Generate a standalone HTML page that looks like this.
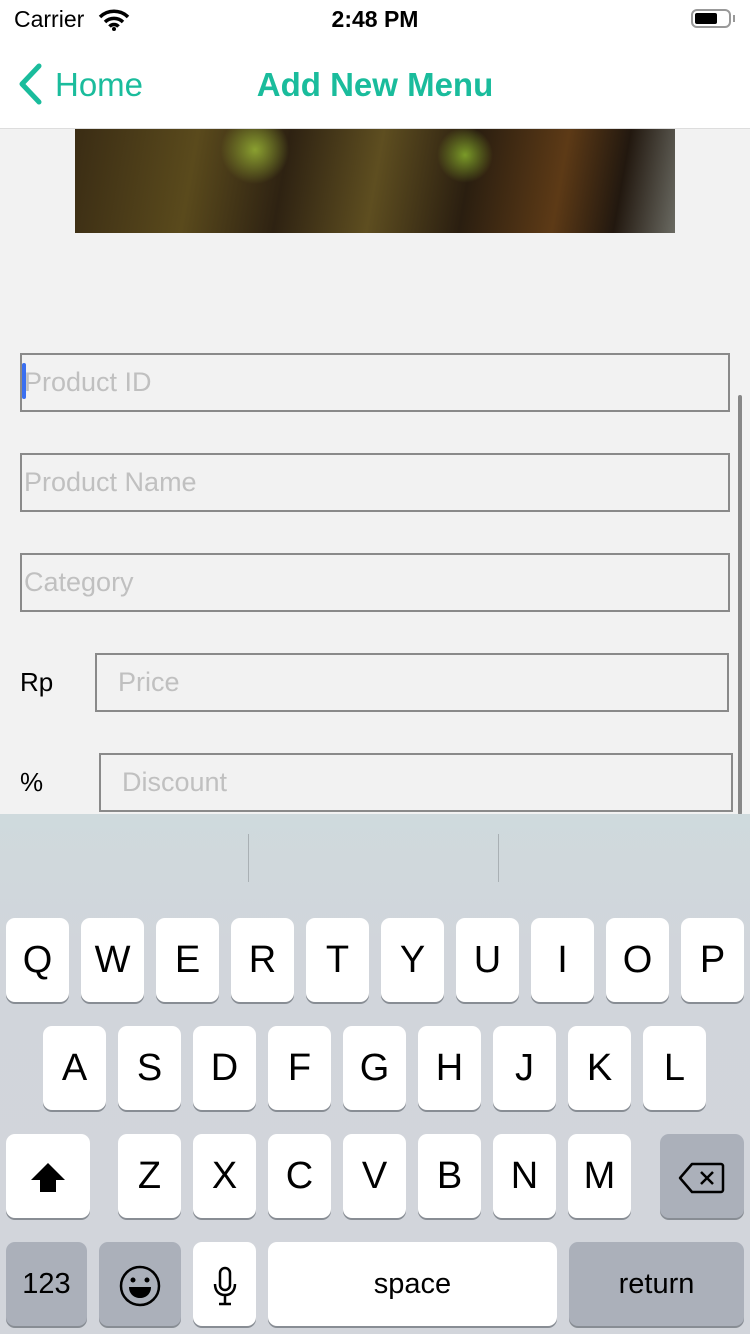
<!DOCTYPE html><html><head><meta charset="utf-8"><style>
body{margin:0;width:750px;height:1334px;position:relative;overflow:hidden;background:#f2f2f2;font-family:"Liberation Sans",sans-serif}
.a{position:absolute}
.f{position:absolute;border:2px solid #8a8a8a;box-sizing:border-box;height:59px;color:#c0c0c0;font-size:27px;line-height:55px;padding-left:2px}
.k{position:absolute;background:#fff;border-radius:9px;box-shadow:0 2px 0 #888d94;width:63px;height:84px;text-align:center;line-height:84px;font-size:38px;color:#000}
.g{background:#abb0ba}
</style></head><body>
<div class="a" style="top:0;left:0;width:750px;height:128px;background:#fff;border-bottom:1px solid #ddd"></div>
<div class="a" style="left:14px;top:6px;font-size:23px">Carrier</div>
<svg class="a" style="left:98px;top:9px" width="32" height="22" viewBox="0 0 32 22"><path d="M2 8a20 20 0 0 1 28 0M7 13a13 13 0 0 1 18 0M11.5 17.5a6 6 0 0 1 9 0" stroke="#000" stroke-width="3.5" fill="none"/><circle cx="16" cy="20" r="2" fill="#000"/></svg>
<div class="a" style="left:0;width:750px;top:6px;text-align:center;font-size:23px;font-weight:bold">2:48 PM</div>
<div class="a" style="left:691px;top:9px;width:40px;height:19px;border:2px solid #999;border-radius:6px;box-sizing:border-box"></div>
<div class="a" style="left:695px;top:13px;width:22px;height:11px;background:#000;border-radius:2px"></div>
<div class="a" style="left:733px;top:15px;width:2px;height:7px;background:#999"></div>
<svg class="a" style="left:14px;top:62px" width="30" height="44" viewBox="0 0 30 44"><path d="M25 4L8 22l17 18" stroke="#1abc9c" stroke-width="5" fill="none" stroke-linecap="round" stroke-linejoin="round"/></svg>
<div class="a" style="left:55px;top:66px;font-size:33px;color:#1abc9c">Home</div>
<div class="a" style="left:0;width:750px;top:66px;text-align:center;font-size:33px;color:#1abc9c;font-weight:bold">Add New Menu</div>
<div class="a" style="left:75px;top:129px;width:600px;height:104px;background:radial-gradient(circle at 30% 20%,#8aa030 0,transparent 8%),radial-gradient(circle at 65% 25%,#7a9a28 0,transparent 7%),linear-gradient(100deg,#3a2c14,#5a4a1c 20%,#2e2212 35%,#5e4e20 50%,#2a1e10 65%,#5d3a16 80%,#22180f 90%,#6a6a62)"></div>
<div class="a" style="left:738px;top:395px;width:4px;height:420px;background:#888;border-radius:2px"></div>
<div class="f" style="left:20px;top:353px;width:710px">Product ID</div>
<div class="a" style="left:22px;top:363px;width:4px;height:36px;background:#3a6ff0;border-radius:2px"></div>
<div class="f" style="left:20px;top:453px;width:710px">Product Name</div>
<div class="f" style="left:20px;top:553px;width:710px">Category</div>
<div class="a" style="left:20px;top:667px;font-size:26px">Rp</div>
<div class="f" style="left:95px;top:653px;width:634px;padding-left:21px">Price</div>
<div class="a" style="left:20px;top:767px;font-size:26px">%</div>
<div class="f" style="left:99px;top:753px;width:634px;padding-left:21px">Discount</div>
<div class="a" style="left:0;top:814px;width:750px;height:520px;background:linear-gradient(#cfdadd,#d1d5db 25%,#d2d5db)"></div>
<div class="a" style="left:248px;top:834px;width:1px;height:48px;background:#a9b0b4"></div>
<div class="a" style="left:498px;top:834px;width:1px;height:48px;background:#a9b0b4"></div>
<div class="k" style="left:6px;top:918px">Q</div><div class="k" style="left:81px;top:918px">W</div><div class="k" style="left:156px;top:918px">E</div><div class="k" style="left:231px;top:918px">R</div><div class="k" style="left:306px;top:918px">T</div><div class="k" style="left:381px;top:918px">Y</div><div class="k" style="left:456px;top:918px">U</div><div class="k" style="left:531px;top:918px">I</div><div class="k" style="left:606px;top:918px">O</div><div class="k" style="left:681px;top:918px">P</div>
<div class="k" style="left:43px;top:1026px">A</div><div class="k" style="left:118px;top:1026px">S</div><div class="k" style="left:193px;top:1026px">D</div><div class="k" style="left:268px;top:1026px">F</div><div class="k" style="left:343px;top:1026px">G</div><div class="k" style="left:418px;top:1026px">H</div><div class="k" style="left:493px;top:1026px">J</div><div class="k" style="left:568px;top:1026px">K</div><div class="k" style="left:643px;top:1026px">L</div>
<div class="k" style="left:6px;top:1134px;width:84px"><svg width="40" height="34" viewBox="0 0 40 34" style="vertical-align:middle"><path d="M20 2L3 19h9v12h16V19h9z" fill="#000"/></svg></div>
<div class="k" style="left:118px;top:1134px">Z</div><div class="k" style="left:193px;top:1134px">X</div><div class="k" style="left:268px;top:1134px">C</div><div class="k" style="left:343px;top:1134px">V</div><div class="k" style="left:418px;top:1134px">B</div><div class="k" style="left:493px;top:1134px">N</div><div class="k" style="left:568px;top:1134px">M</div>
<div class="k g" style="left:660px;top:1134px;width:84px"><svg width="48" height="34" viewBox="0 0 48 34" style="vertical-align:middle"><path d="M14 3h29a2 2 0 0 1 2 2v24a2 2 0 0 1-2 2H14L2 17z" stroke="#000" stroke-width="2.5" fill="none" stroke-linejoin="round"/><path d="M23 11l12 12M35 11L23 23" stroke="#000" stroke-width="2.5"/></svg></div>
<div class="k g" style="left:6px;top:1242px;width:81px;font-size:29px">123</div>
<div class="k g" style="left:99px;top:1242px;width:82px"><svg width="42" height="42" viewBox="0 0 42 42" style="vertical-align:middle"><circle cx="21" cy="21" r="19" stroke="#000" stroke-width="2.5" fill="none"/><circle cx="14" cy="15" r="2.5"/><circle cx="28" cy="15" r="2.5"/><path d="M10 22h22c0 7-5 11-11 11s-11-4-11-11z"/></svg></div>
<div class="k" style="left:193px;top:1242px"><svg width="26" height="40" viewBox="0 0 26 40" style="vertical-align:middle"><rect x="8" y="2" width="10" height="22" rx="5" stroke="#000" stroke-width="2.5" fill="none"/><path d="M3 18c0 7 4 11 10 11s10-4 10-11M13 29v8M7 38h12" stroke="#000" stroke-width="2.5" fill="none"/></svg></div>
<div class="k" style="left:268px;top:1242px;width:289px;font-size:29px">space</div>
<div class="k g" style="left:569px;top:1242px;width:175px;font-size:29px">return</div>
</body></html>
